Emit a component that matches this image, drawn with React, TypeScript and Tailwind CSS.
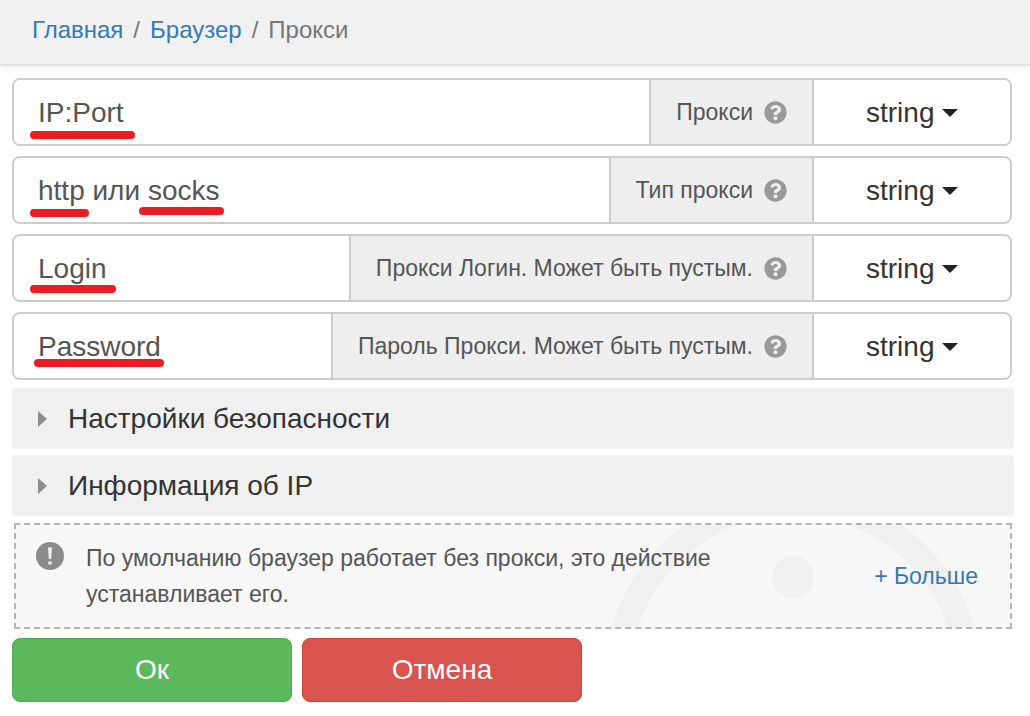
import { useState } from 'react'
import { FaQuestionCircle } from 'react-icons/fa'

interface Mark {
  className: string
}

interface Field {
  id: string
  label: string
  value: string
  marks: Mark[]
}

const fields: Field[] = [
  {
    id: 'proxy',
    label: 'Прокси',
    value: 'IP:Port',
    marks: [{ className: 'left-4 top-[51px] w-[105px]' }],
  },
  {
    id: 'proxy-type',
    label: 'Тип прокси',
    value: 'http или socks',
    marks: [
      { className: 'left-4 top-[51px] w-[59px]' },
      { className: 'left-[125px] top-[49px] w-[85px]' },
    ],
  },
  {
    id: 'proxy-login',
    label: 'Прокси Логин. Может быть пустым.',
    value: 'Login',
    marks: [{ className: 'left-4 top-[49px] w-[86px]' }],
  },
  {
    id: 'proxy-password',
    label: 'Пароль Прокси. Может быть пустым.',
    value: 'Password',
    marks: [{ className: 'left-5 top-[45px] w-[130px]' }],
  },
]

const sections = ['Настройки безопасности', 'Информация об IP']

function FieldRow({ field }: { field: Field }) {
  const [value, setValue] = useState(field.value)

  return (
    <div className="flex h-[68px] rounded-lg border-2 border-[#ccc] overflow-hidden text-[28px]">
      <div className="relative flex-1 min-w-0">
        <input
          id={field.id}
          type="text"
          value={value}
          onChange={(e) => setValue(e.target.value)}
          className="w-full h-full px-6 pt-px bg-white text-[#555] outline-none"
        />
        {field.marks.map((mark, index) => (
          <span
            key={index}
            className={`absolute h-2 rounded-full bg-[#ed1c24] pointer-events-none ${mark.className}`}
          />
        ))}
      </div>
      <label
        htmlFor={field.id}
        className="flex items-center gap-[11px] px-[25px] border-x-2 border-[#ccc] bg-[#eee] text-[23px] text-[#555] whitespace-nowrap"
      >
        {field.label}
        <FaQuestionCircle className="w-[23px] h-[23px] text-[#999]" />
      </label>
      <div className="relative w-[196px]">
        <select
          aria-label={`${field.label} тип значения`}
          className="w-full h-full pl-[52px] pt-px appearance-none bg-white text-[#333] outline-none"
        >
          <option>string</option>
        </select>
        <svg className="absolute right-[52px] top-[29px] w-4 h-2 text-[#222] pointer-events-none" viewBox="0 0 16 8">
          <path d="M0 0h16L8 8z" fill="currentColor" />
        </svg>
      </div>
    </div>
  )
}

function SectionButton({ title }: { title: string }) {
  return (
    <button
      type="button"
      aria-expanded={false}
      className="flex items-center gap-5 h-[61px] px-[25px] pt-px rounded bg-[#f0f0f0] text-[28px] text-[#333] text-left"
    >
      <svg className="w-[11px] h-4" viewBox="0 0 11 16">
        <path d="M1 0l9 8-9 8z" fill="#8c8c8c" />
      </svg>
      {title}
    </button>
  )
}

export default function App() {
  return (
    <div className="min-h-screen bg-white font-['Liberation_Sans',Arial,sans-serif]">
      <nav
        aria-label="breadcrumb"
        className="flex items-center gap-[10px] h-[66px] px-8 pb-1 bg-[#f1f1f1] border-b-2 border-[#e2e2e2] shadow-md shadow-black/5 text-2xl text-[#777]"
      >
        <a href="#home" className="text-[#337ab7]">Главная</a>
        <span>/</span>
        <a href="#browser" className="text-[#337ab7]">Браузер</a>
        <span>/</span>
        <span>Прокси</span>
      </nav>

      <main className="px-3 pt-3">
        <div className="flex flex-col gap-[10px] mr-[6px]">
          {fields.map((field) => (
            <FieldRow key={field.id} field={field} />
          ))}
        </div>

        <div className="flex flex-col gap-[6px] mt-2 mr-1">
          {sections.map((title) => (
            <SectionButton key={title} title={title} />
          ))}
        </div>

        <div className="relative flex items-center mt-[7px] ml-[2px] mr-[6px] h-[106px] pl-5 pr-8 border-2 border-dashed border-[#b5b5b5] bg-[#f7f7f7] overflow-hidden text-[23px]">
          <svg className="absolute right-[28px] top-0 w-[378px] h-[104px]" viewBox="0 0 378 104" fill="none">
            <circle cx="189" cy="154" r="176" stroke="#f0f0f0" strokeWidth="25" />
            <circle cx="189" cy="52" r="21" fill="#f0f0f0" />
          </svg>
          <svg className="relative shrink-0 self-start w-7 h-7 mt-[17px]" viewBox="0 0 28 28">
            <circle cx="14" cy="14" r="14" fill="#8c8c8c" />
            <path d="M12 5.5h4l-.8 11.5h-2.4z" fill="#f0f0f0" />
            <path d="M12.3 19.5h3.4v3h-3.4z" fill="#f0f0f0" />
          </svg>
          <p className="relative flex-1 max-w-[680px] ml-[22px] leading-9 text-[#555]">
            По умолчанию браузер работает без прокси, это действие устанавливает его.
          </p>
          <a href="#more" className="relative ml-auto text-[#337ab7] whitespace-nowrap">+ Больше</a>
        </div>

        <div className="flex gap-[10px] mt-[9px]">
          <button type="button" className="w-[280px] h-16 rounded-lg border border-[#4cae4c] bg-[#5cb85c] text-[28px] text-white">
            Ок
          </button>
          <button type="button" className="w-[280px] h-16 rounded-lg border border-[#d43f3a] bg-[#d9534f] text-[28px] text-white">
            Отмена
          </button>
        </div>
      </main>
    </div>
  )
}
